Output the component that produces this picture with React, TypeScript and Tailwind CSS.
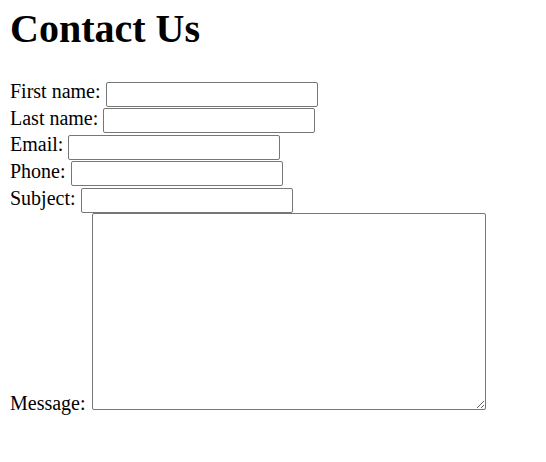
const fields = [
  { id: 'first-name', label: 'First name:' },
  { id: 'last-name', label: 'Last name:' },
  { id: 'email', label: 'Email:' },
  { id: 'phone', label: 'Phone:' },
  { id: 'subject', label: 'Subject:' },
];

export default function App() {
  return (
    <div className="min-h-[462px] bg-white px-[10px] pt-[6px] text-[20px] text-black font-['Liberation_Serif','Times_New_Roman',serif]">
      <h1 className="text-[40px] font-bold leading-[46px]">Contact Us</h1>

      <form className="mt-[28px] flex flex-col">
        {fields.map((field) => (
          <div key={field.id} className="flex h-[26.67px] items-start gap-[5px]">
            <label htmlFor={field.id} className="leading-[23px]">
              {field.label}
            </label>
            <input
              id={field.id}
              type="text"
              className="mt-[1.5px] h-[25px] w-[212px] rounded-[2px] border border-[#767676] bg-white px-[2.5px] font-['Liberation_Sans',Arial,sans-serif] text-[16.67px]"
            />
          </div>
        ))}

        {/* Message */}
        <div className="flex items-end gap-[6px]">
          <label htmlFor="message" className="-mb-[4.5px] leading-[23px]">
            Message:
          </label>
          <textarea
            id="message"
            className="h-[197px] w-[394px] rounded-[2px] border border-[#767676] bg-white px-[2.5px] font-['Liberation_Mono',monospace] text-[16.67px]"
          />
        </div>
      </form>
    </div>
  );
}
